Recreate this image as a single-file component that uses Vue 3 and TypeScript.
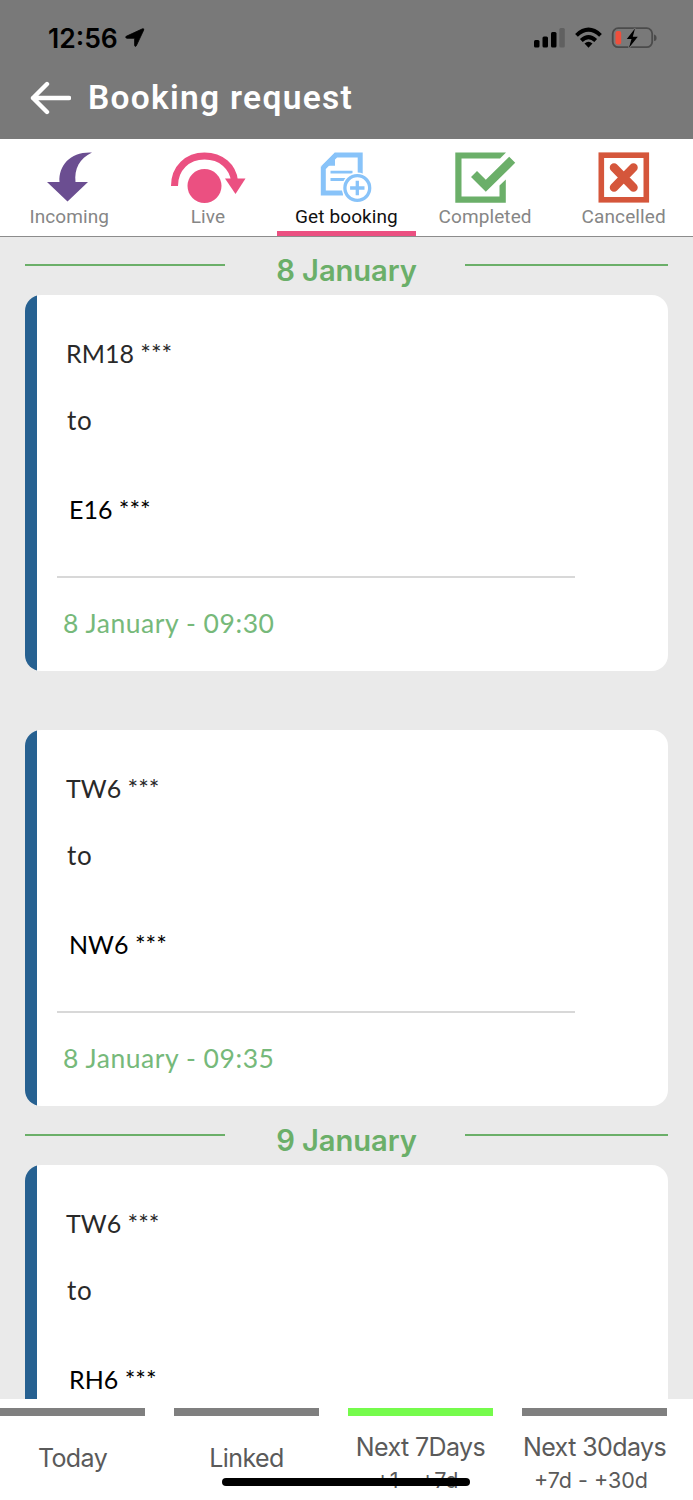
<script setup lang="ts">
interface Tab {
  id: string
  label: string
}
interface Booking {
  from: string
  to: string
  time?: string
}
interface Day {
  label: string
  bookings: Booking[]
}
interface Range {
  label: string
  sub?: string
  active?: boolean
}

const tabs: Tab[] = [
  { id: 'incoming', label: 'Incoming' },
  { id: 'live', label: 'Live' },
  { id: 'get', label: 'Get booking' },
  { id: 'completed', label: 'Completed' },
  { id: 'cancelled', label: 'Cancelled' },
]
const activeTab = 'get'

const days: Day[] = [
  {
    label: '8 January',
    bookings: [
      { from: 'RM18 ***', to: 'E16 ***', time: '8 January - 09:30' },
      { from: 'TW6 ***', to: 'NW6 ***', time: '8 January - 09:35' },
    ],
  },
  {
    label: '9 January',
    bookings: [{ from: 'TW6 ***', to: 'RH6 ***' }],
  },
]

const ranges: Range[] = [
  { label: 'Today' },
  { label: 'Linked' },
  { label: 'Next 7Days', sub: '+1 - +7d', active: true },
  { label: 'Next 30days', sub: '+7d - +30d' },
]
</script>

<template>
  <div class="screen">
    <header class="header">
      <div class="status">
        <span class="clock">12:56</span>
        <svg class="location" width="20" height="20" viewBox="0 0 20 20">
          <path d="M1.2 8.3 17.5.8Q19.3.3 18.7 2.1L11.3 17.8Q10 19.2 9.6 17.4V10.300H1.9Q-.2 9.500 1.200 8.300Z" stroke="#000" stroke-width=".8" />
        </svg>
        <svg class="signals" width="126" height="24" viewBox="0 0 126 24">
          <rect x="1" y="14" width="5.500" height="7.500" rx="1.500" />
          <rect x="9.500" y="10.500" width="5.500" height="11" rx="1.500" />
          <rect x="18" y="6" width="5.500" height="15.500" rx="1.500" />
          <rect x="26.300" y="2" width="5.500" height="19.500" rx="1.500" fill="#606060" />
          <g fill="none" stroke="#000" stroke-width="4">
            <path d="M43.500 9.400Q55.500-2 67.500 9.400" />
            <path d="M48.300 14.500Q55.500 7.700 62.700 14.500" />
          </g>
          <path d="M51.500 17.500Q55.500 14.200 59.500 17.500L55.500 21.800Z" />
          <rect x="79.700" y="2.200" width="39.500" height="19" rx="5.500" fill="none" stroke="#4b4b4b" stroke-width="1.800" />
          <path d="M121 8.500Q123.600 9 123.600 12T121 15Z" fill="#4b4b4b" />
          <rect x="82.500" y="5" width="5.700" height="13.500" rx="2" fill="#ef4f3c" />
          <path d="M102 2.500 93.800 13H98.500L96 21.700 104.800 10.700H99.800Z" stroke="#797979" stroke-width="2" paint-order="stroke" />
        </svg>
      </div>
      <div class="title-row">
        <svg width="42" height="34" viewBox="0 0 42 34">
          <path d="M18 3 4 17 18 31M4 17H40" fill="none" stroke="#fff" stroke-width="4.400" stroke-linecap="round" stroke-linejoin="round" />
        </svg>
        <h1 class="title">Booking request</h1>
      </div>
    </header>

    <nav class="tabs">
      <div v-for="tab in tabs" :key="tab.id" class="tab" :class="[tab.id, { active: tab.id === activeTab }]">
        <svg v-if="tab.id === 'incoming'" class="icon" width="76" height="52" viewBox="0 0 76 52">
          <path d="M61 .6C40-.5 27.500 13 28.500 30H16L36.500 49.500 57 30H44.500C43 17 48.500 6.500 61 .6Z" fill="#6b4e91" />
        </svg>
        <svg v-else-if="tab.id === 'live'" class="icon" width="76" height="52" viewBox="0 0 76 52">
          <path d="M7.500 34C7.500 16 20.500 4 37.500 4C54.500 4 66 15 67.500 29" fill="none" stroke="#eb5081" stroke-width="7" />
          <path d="M58 26.500H78.500L68.500 42Z" fill="#eb5081" />
          <circle cx="37.500" cy="34" r="17" fill="#eb5081" />
        </svg>
        <svg v-else-if="tab.id === 'get'" class="icon" width="76" height="52" viewBox="0 0 76 52">
          <g fill="none" stroke="#88c3f9">
            <path d="M52.200 24V3H28L15.300 16V41H35" stroke-width="5" />
            <path d="M22.500 20.200H44.500M22.500 27.500H38" stroke-width="2.800" />
            <circle cx="49.300" cy="36" r="15.500" fill="#fff" stroke="none" />
            <circle cx="49.300" cy="36" r="12.400" stroke-width="3.300" />
            <path d="M49.300 28.800V43.200M42.100 36H56.500" stroke-width="3.300" />
          </g>
          <path d="M12.800 14.500 27 .5V13.700H12.800Z" fill="#88c3f9" />
        </svg>
        <svg v-else-if="tab.id === 'completed'" class="icon" width="76" height="52" viewBox="0 0 76 52">
          <path d="M59 .5H8.300V50.700H58.800V27.500L52.500 33.500V44.500H14.500V6.500H53Z" fill="#6baf69" />
          <path d="M24 25 30 19 38.800 27.800 62.200 4.800 68.200 10.800 38.800 39.800Z" fill="#6baf69" />
        </svg>
        <svg v-else class="icon" width="76" height="52" viewBox="0 0 76 52">
          <rect x="15.300" y="3.200" width="45" height="44.600" fill="#fff" stroke="#d5563b" stroke-width="5.600" />
          <path d="M28 15.500 47.500 35.500M47.500 15.500 28 35.500" stroke="#d5563b" stroke-width="8.500" stroke-linecap="round" />
        </svg>
        <span class="tab-label">{{ tab.label }}</span>
      </div>
    </nav>

    <main class="list">
      <section v-for="day in days" :key="day.label">
        <div class="day">
          <i class="rule left" />
          <h2 class="day-label">{{ day.label }}</h2>
          <i class="rule right" />
        </div>
        <div class="cards">
          <article v-for="b in day.bookings" :key="b.to" class="card">
            <p class="line from">{{ b.from }}</p>
            <p class="line via">to</p>
            <p class="line dest">{{ b.to }}</p>
            <hr class="divider" />
            <p v-if="b.time" class="line time">{{ b.time }}</p>
          </article>
        </div>
      </section>
    </main>

    <footer class="footer">
      <div v-for="r in ranges" :key="r.label" class="range" :class="{ active: r.active, double: r.sub }">
        <div class="range-text">
          <span class="range-label">{{ r.label }}</span>
          <span v-if="r.sub" class="range-sub">{{ r.sub }}</span>
        </div>
      </div>
      <div class="home-indicator" />
    </footer>
  </div>
</template>

<style>
body {
  background: #eaeaea;
}
</style>

<style scoped>
.screen {
  position: relative;
  display: flex;
  flex-direction: column;
  width: 693px;
  height: 1500px;
  overflow: hidden;
  background: #eaeaea;
  font-family: Inter, "Liberation Sans", sans-serif;
  white-space: nowrap;
}
.header {
  flex: none;
  box-sizing: border-box;
  height: 139px;
  padding-top: 26px;
  background: #797979;
}
.status {
  display: flex;
  align-items: center;
  height: 24px;
  padding-left: 48px;
}
.clock {
  width: 77px;
  font-size: 26.500px;
  font-weight: 600;
  line-height: 24px;
}
.signals {
  margin-left: 388px;
}
.title-row {
  display: flex;
  align-items: center;
  height: 34px;
  margin-top: 31px;
  padding-left: 29px;
}
.title-row svg {
  margin-top: -1px;
}
.title {
  margin: 0 0 0 17px;
  color: #fff;
  font: 600 33.500px/34px Roboto, sans-serif;
  letter-spacing: 1.3px;
}
.tabs {
  flex: none;
  display: grid;
  grid-template-columns: repeat(5, 1fr);
  box-sizing: border-box;
  height: 98px;
  border-bottom: 1px solid #8c8c8c;
  background: #fff;
}
.tab {
  display: flex;
  flex-direction: column;
  align-items: center;
  box-sizing: border-box;
  padding-top: 13px;
  color: #868686;
}
.tab.active {
  color: #111;
  border-bottom: 5px solid #eb5081;
}
.icon {
  flex: none;
  overflow: visible;
}
.tab.live .icon {
  margin-left: -6px;
}
.tab-label {
  margin-top: 1px;
  font: 400 19px/24px Roboto, sans-serif;
  letter-spacing: 0.1px;
}
.list {
  flex: 1;
  min-height: 0;
  margin-top: -1px;
  overflow: hidden;
  padding: 0 25px;
}
.day {
  display: flex;
  justify-content: space-between;
  height: 59px;
}
.rule {
  height: 2px;
  margin-top: 28.400px;
  background: #6baf69;
}
.rule.left {
  width: 200px;
}
.rule.right {
  width: 203px;
}
.day-label {
  margin: 20px 0 0 3px;
  color: #6baf69;
  font-size: 29.200px;
  font-weight: 600;
  line-height: 30px;
  letter-spacing: -0.1px;
}
.cards {
  display: flex;
  flex-direction: column;
  gap: 59px;
}
.card {
  box-sizing: border-box;
  height: 376px;
  padding: 43px 0 0 41px;
  overflow: hidden;
  border-radius: 16px;
  background: linear-gradient(to right, #276191 12px, #fff 12px);
}
.line {
  height: 30px;
  margin: 0;
  color: #292929;
  font: 400 25px/30px Lato, sans-serif;
}
.via {
  margin: 37px 0 0 1px;
  font-size: 26px;
  letter-spacing: 0.8px;
}
.dest {
  margin: 59px 0 0 3px;
  color: #000;
}
.divider {
  width: 518px;
  height: 2px;
  margin: 52px 0 30px -9px;
  border: 0;
  background: #d8d8d8;
}
.time {
  margin-left: -3px;
  color: #76b97a;
  font-size: 26.500px;
  letter-spacing: 0.55px;
}
.footer {
  position: relative;
  flex: none;
  display: grid;
  grid-template-columns: repeat(4, 145px);
  column-gap: 29px;
  box-sizing: border-box;
  height: 101px;
  padding-top: 9px;
  background: #fff;
}
.range {
  border-top: 8px solid #7f7f7f;
}
.range.active {
  border-color: #75fb4c;
}
.range-text {
  display: flex;
  flex-direction: column;
  align-items: center;
  justify-content: center;
  box-sizing: border-box;
  height: 84px;
  color: #5a5a5a;
}
.double .range-text {
  justify-content: flex-start;
  padding-top: 14px;
}
.range-label {
  font-size: 25px;
  line-height: 34px;
  letter-spacing: -0.6px;
}
.range-sub {
  margin-right: 7px;
  font-size: 21.500px;
  line-height: 33px;
}
.home-indicator {
  position: absolute;
  left: 222px;
  bottom: 14px;
  width: 248px;
  height: 8px;
  border-radius: 4px;
  background: #000;
}
</style>
